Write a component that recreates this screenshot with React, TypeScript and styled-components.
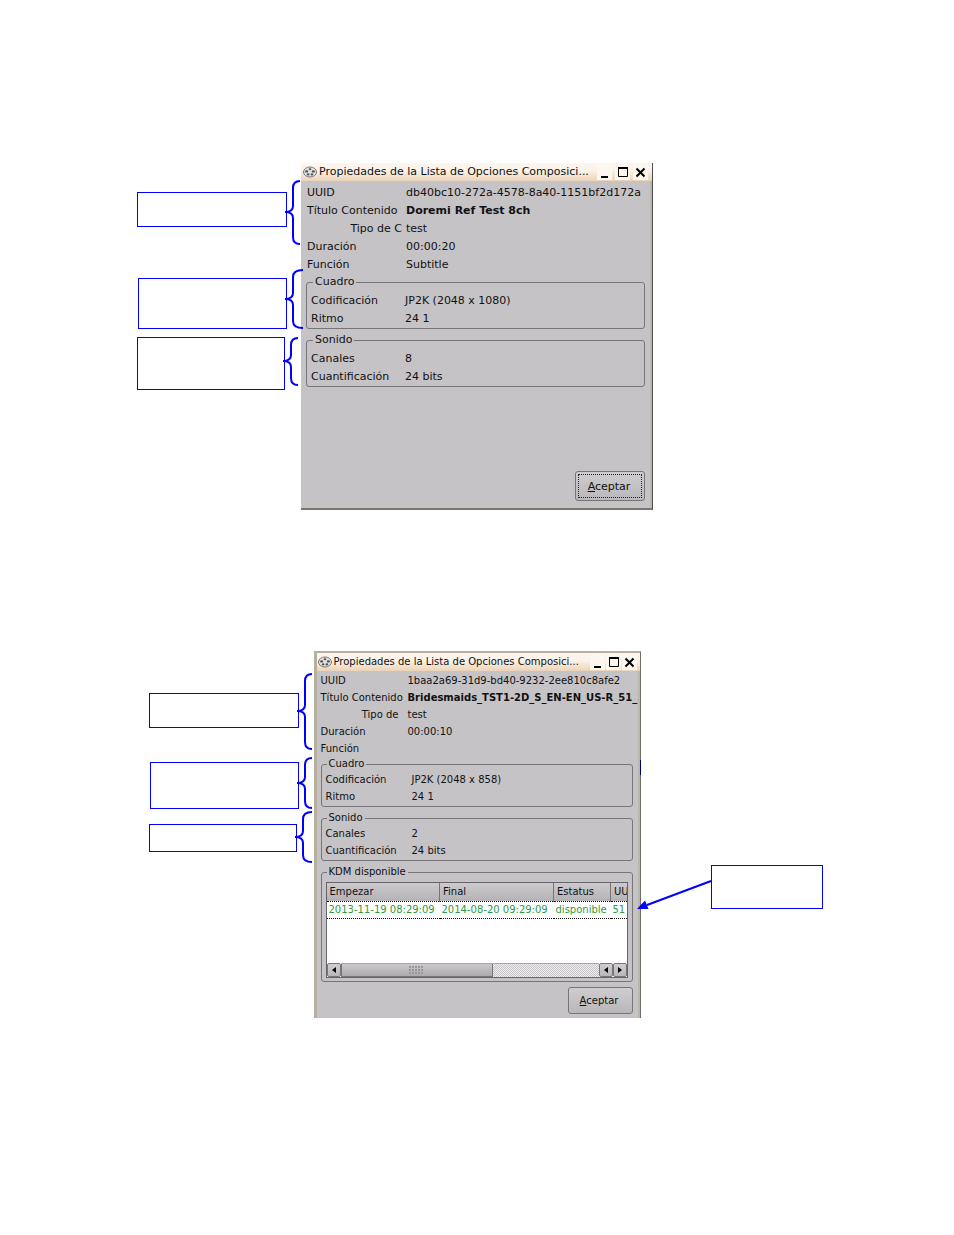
import React from "react";
import styled, { createGlobalStyle, css } from "styled-components";

const BLUE = "#0000ff";
const PANEL = "#c6c3c6";

const GlobalStyle = createGlobalStyle`
  * { box-sizing: border-box; }
  body { margin: 0; background: #fff; color: #111; font-family: "DejaVu Sans", sans-serif; }
`;

const Page = styled.main`
  display: flex;
  flex-direction: column;
  gap: 141px;
  padding: 163px 0 217px;
`;

const Figure = styled.section<{ $dialog: number }>`
  display: grid;
  grid-template-columns: 1fr ${(p) => p.$dialog}px 1fr;
`;

const Notes = styled.div<{ $top: number }>`
  position: relative;
  z-index: 1;
  display: flex;
  flex-direction: column;
  align-items: flex-end;
  padding-top: ${(p) => p.$top}px;
`;

const RightNotes = styled.div`
  position: relative;
  z-index: 1;
  display: flex;
  align-items: flex-start;
  padding-top: 214px;
`;

const Note = styled.div<{ $gap?: number; $end: number }>`
  display: flex;
  align-items: flex-start;
  margin-top: ${(p) => p.$gap ?? 0}px;
  margin-right: ${(p) => p.$end}px;
`;

const NoteBox = styled.div<{ $w: number; $h: number; $drop?: number }>`
  width: ${(p) => p.$w}px;
  height: ${(p) => p.$h}px;
  margin-top: ${(p) => p.$drop ?? 0}px;
  border: 1px solid ${BLUE};
  background: #fff;
`;

const BraceSvg = styled.svg`
  display: block;
  margin-left: -2px;
  overflow: visible;
`;

function Brace({ width = 15, height, tip }: { width?: number; height: number; tip: number }) {
  const mid = 8;
  const end = height - 1;
  return (
    <BraceSvg width={width} height={height} aria-hidden="true">
      <path
        d={`M${width} 1 Q${mid} 1 ${mid} 8 V${tip - 6} Q${mid} ${tip} 0 ${tip} Q${mid} ${tip} ${mid} ${tip + 6} V${end - 7} Q${mid} ${end} ${width} ${end}`}
        fill="none"
        stroke={BLUE}
        strokeWidth="2"
      />
    </BraceSvg>
  );
}

const Window = styled.article<{ $small?: boolean }>`
  position: relative;
  display: flex;
  flex-direction: column;
  min-width: 0;
  background: ${PANEL};
  font-size: 11px;
  border-right: 1px solid #4c4c4c;
  border-bottom: 2px solid #77766f;
  box-shadow: inset -2px 0 #b9b7ae;
  ${(p) =>
    p.$small &&
    css`
      font-size: 10px;
      border: solid #b6b09f;
      border-width: 2px 1px 0 3px;
      border-right-color: #6f6e66;
      &::after {
        content: "";
        position: absolute;
        top: 107px;
        right: -1px;
        width: 1px;
        height: 15px;
        background: #000070;
      }
    `}
`;

const TitleBar = styled.header<{ $small?: boolean }>`
  display: flex;
  align-items: center;
  height: 18px;
  padding: 0 ${(p) => (p.$small ? 3 : 4)}px 0 ${(p) => (p.$small ? 1 : 2)}px;
  background: linear-gradient(#fdf6ee, #fbf3ea 40%, #ecd3b8);
`;

const Title = styled.h2`
  flex: 1;
  min-width: 0;
  margin: 0 0 0 2px;
  font-size: inherit;
  font-weight: 400;
  line-height: 18px;
  white-space: nowrap;
`;

const WinButtons = styled.div<{ $small?: boolean }>`
  display: flex;
  gap: ${(p) => (p.$small ? 1 : 3)}px;
`;

const WinButton = styled.button`
  display: block;
  width: 15px;
  height: 16px;
  padding: 0;
  border: 0;
  background: #fdf7ef;
  svg { display: block; }
`;

function WindowIcon() {
  return (
    <svg width="14" height="14" viewBox="0 0 14 14" aria-hidden="true">
      <ellipse cx="7" cy="7" rx="6.5" ry="5" fill="#e4e4e4" stroke="#777" />
      <ellipse cx="7" cy="4.2" rx="1.4" ry="1" fill="#555" />
      <ellipse cx="3.6" cy="6.4" rx="1.6" ry="1.2" fill="#555" />
      <ellipse cx="10.4" cy="6.4" rx="1.6" ry="1.2" fill="#555" />
      <ellipse cx="5.1" cy="9.4" rx="1.4" ry="1.1" fill="#555" />
      <ellipse cx="8.9" cy="9.4" rx="1.4" ry="1.1" fill="#555" />
    </svg>
  );
}

function WindowTitle({ small }: { small?: boolean }) {
  return (
    <TitleBar $small={small}>
      <WindowIcon />
      <Title>Propiedades de la Lista de Opciones Composici...</Title>
      <WinButtons $small={small}>
        <WinButton aria-label="Minimizar">
          <svg width="15" height="16"><path d="M4 13h7" stroke="#000" strokeWidth="2" /></svg>
        </WinButton>
        <WinButton aria-label="Maximizar">
          <svg width="15" height="16">
            <path d="M3.5 4v8.5h9V4" fill="none" stroke="#000" />
            <path d="M3 4h10" stroke="#000" strokeWidth="2" />
          </svg>
        </WinButton>
        <WinButton aria-label="Cerrar">
          <svg width="15" height="16"><path d="M3.5 4.500l8 8M11.5 4.500l-8 8" stroke="#000" strokeWidth="2" /></svg>
        </WinButton>
      </WinButtons>
    </TitleBar>
  );
}

const Body = styled.div<{ $small?: boolean }>`
  flex: 1;
  display: flex;
  flex-direction: column;
  padding: ${(p) => (p.$small ? "1px 7px 4px 4px" : "2px 7px 7px 5px")};
`;

const Fields = styled.dl<{ $label: number; $row: number; $line: number; $indent?: number }>`
  display: grid;
  grid-template-columns: ${(p) => p.$label}px 1fr;
  grid-auto-rows: ${(p) => p.$row}px;
  line-height: ${(p) => p.$line}px;
  margin: 0;
  padding-left: ${(p) => p.$indent ?? 0}px;
  white-space: nowrap;
`;

const Label = styled.dt<{ $right?: number }>`
  padding-right: ${(p) => p.$right ?? 0}px;
  text-align: ${(p) => (p.$right ? "right" : "left")};
`;

const Value = styled.dd<{ $bold?: boolean }>`
  min-width: 0;
  margin: 0;
  font-weight: ${(p) => (p.$bold ? 700 : 400)};
`;

const ClippedValue = styled(Value)`
  overflow: hidden;
  margin-right: -5px;
`;

const Group = styled.fieldset<{ $small?: boolean }>`
  min-width: 0;
  margin: 0 0 ${(p) => (p.$small ? 4 : 2)}px;
  padding: 0 4px 1px;
  border: 1px solid #77757a;
  border-radius: 3px;
`;

const Legend = styled.legend<{ $small?: boolean }>`
  margin-left: ${(p) => (p.$small ? 1 : 2)}px;
  padding: 0 2px;
  line-height: ${(p) => (p.$small ? 14 : 18)}px;
`;

const Footer = styled.footer<{ $space?: number }>`
  display: flex;
  justify-content: flex-end;
  padding-top: ${(p) => p.$space ?? 0}px;
`;

const Accept = styled.button<{ $small?: boolean }>`
  width: ${(p) => (p.$small ? 65 : 70)}px;
  height: ${(p) => (p.$small ? 27 : 30)}px;
  padding: 0 2px 0 0;
  font: inherit;
  color: inherit;
  background: linear-gradient(#cfcdcf, #b9b7b9);
  border: 1px solid #77757a;
  border-radius: 3px;
  ${(p) =>
    !p.$small &&
    css`
      outline: 1px dotted #222;
      outline-offset: -4px;
    `}
`;

const Scroller = styled.div`
  margin: 3px 0 2px;
  border: 1px solid #66646a;
  background: #fff;
`;

const TableArea = styled.div`
  height: 80px;
  overflow: hidden;
`;

const Table = styled.table`
  width: 100%;
  table-layout: fixed;
  border-collapse: collapse;
  white-space: nowrap;
`;

const Th = styled.th<{ $w?: number }>`
  width: ${(p) => (p.$w ? `${p.$w}px` : "auto")};
  height: 18px;
  padding: 0 0 0 3px;
  overflow: hidden;
  font-weight: 400;
  text-align: left;
  background: linear-gradient(#cccacc, #b4b2b4);
  border-right: 1px solid #77757a;
  &:last-child { border-right: 0; }
`;

const Td = styled.td`
  height: 17px;
  padding: 0 0 0 2px;
  overflow: hidden;
  color: #2c9c3c;
  border-top: 1px dotted #111;
  border-bottom: 1px dotted #111;
`;

const ScrollBar = styled.div`
  display: flex;
  height: 14px;
`;

const Arrow = styled.button`
  width: 14px;
  height: 14px;
  padding: 0;
  background: linear-gradient(#d0ced0, #b9b7b9);
  border: 1px solid #77757a;
  border-radius: 2px;
  svg { display: block; }
`;

const Track = styled.div`
  flex: 1;
  display: flex;
  background: repeating-conic-gradient(#c6c3c6 0 25%, #f0eff0 0 50%) 0 0 / 2px 2px;
  border-top: 1px solid #aaa8aa;
`;

const Thumb = styled.div`
  display: flex;
  align-items: center;
  justify-content: center;
  width: 59%;
  background: linear-gradient(#cac8ca, #adabad);
  border: 1px solid #77757a;
  border-top: 0;
`;

const Grip = styled.span`
  width: 15px;
  height: 9px;
  background: radial-gradient(circle at 1px 1px, #9a989a 1px, transparent 1px) 0 0 / 3px 3px;
`;

const Pointer = styled.svg`
  display: block;
  margin-left: -4px;
  overflow: visible;
`;

function ArrowIcon({ next }: { next?: boolean }) {
  return (
    <svg width="12" height="12" aria-hidden="true">
      <path d={next ? "M4 3v6l4-3z" : "M8 3v6L4 6z"} fill="#000" />
    </svg>
  );
}

export default function App() {
  return (
    <>
      <GlobalStyle />
      <Page>
        <Figure $dialog={352}>
          <Notes $top={17}>
            <Note $end={1}>
              <NoteBox $w={150} $h={35} $drop={12} />
              <Brace height={65} tip={32} />
            </Note>
            <Note $gap={24} $end={-2}>
              <NoteBox $w={149} $h={51} $drop={9} />
              <Brace width={18} height={60} tip={30} />
            </Note>
            <Note $gap={8} $end={3}>
              <NoteBox $w={148} $h={53} />
              <Brace height={49} tip={24} />
            </Note>
          </Notes>
          <Window>
            <WindowTitle />
            <Body>
              <Fields $label={99} $row={18} $line={20} $indent={1}>
                <Label>UUID</Label>
                <Value>db40bc10-272a-4578-8a40-1151bf2d172a</Value>
                <Label>Título Contenido</Label>
                <Value $bold>Doremi Ref Test 8ch</Value>
                <Label $right={4}>Tipo de C</Label>
                <Value>test</Value>
                <Label>Duración</Label>
                <Value>00:00:20</Value>
                <Label>Función</Label>
                <Value>Subtitle</Value>
              </Fields>
              <Group>
                <Legend>Cuadro</Legend>
                <Fields $label={94} $row={18} $line={20}>
                  <Label>Codificación</Label>
                  <Value>JP2K (2048 x 1080)</Value>
                  <Label>Ritmo</Label>
                  <Value>24 1</Value>
                </Fields>
              </Group>
              <Group>
                <Legend>Sonido</Legend>
                <Fields $label={94} $row={18} $line={20}>
                  <Label>Canales</Label>
                  <Value>8</Value>
                  <Label>Cuantificación</Label>
                  <Value>24 bits</Value>
                </Fields>
              </Group>
              <Footer $space={82}>
                <Accept><u>A</u>ceptar</Accept>
              </Footer>
            </Body>
          </Window>
        </Figure>

        <Figure $dialog={327}>
          <Notes $top={22}>
            <Note $end={2}>
              <NoteBox $w={150} $h={35} $drop={20} />
              <Brace height={77} tip={38} />
            </Note>
            <Note $gap={7} $end={2}>
              <NoteBox $w={149} $h={47} $drop={5} />
              <Brace height={52} tip={26} />
            </Note>
            <Note $gap={2} $end={2}>
              <NoteBox $w={148} $h={28} $drop={13} />
              <Brace width={17} height={52} tip={26} />
            </Note>
          </Notes>
          <Window $small>
            <WindowTitle small />
            <Body $small>
              <Fields $label={87} $row={17} $line={17}>
                <Label>UUID</Label>
                <Value>1baa2a69-31d9-bd40-9232-2ee810c8afe2</Value>
                <Label>Título Contenido</Label>
                <ClippedValue $bold>Bridesmaids_TST1-2D_S_EN-EN_US-R_51_2</ClippedValue>
                <Label $right={9}>Tipo de</Label>
                <Value>test</Value>
                <Label>Duración</Label>
                <Value>00:00:10</Value>
                <Label>Función</Label>
                <Value />
              </Fields>
              <Group $small>
                <Legend $small>Cuadro</Legend>
                <Fields $label={86} $row={17} $line={17}>
                  <Label>Codificación</Label>
                  <Value>JP2K (2048 x 858)</Value>
                  <Label>Ritmo</Label>
                  <Value>24 1</Value>
                </Fields>
              </Group>
              <Group $small>
                <Legend $small>Sonido</Legend>
                <Fields $label={86} $row={17} $line={17}>
                  <Label>Canales</Label>
                  <Value>2</Value>
                  <Label>Cuantificación</Label>
                  <Value>24 bits</Value>
                </Fields>
              </Group>
              <Group $small>
                <Legend $small>KDM disponible</Legend>
                <Scroller>
                  <TableArea>
                    <Table>
                      <thead>
                        <tr>
                          <Th $w={113}>Empezar</Th>
                          <Th $w={114}>Final</Th>
                          <Th $w={57}>Estatus</Th>
                          <Th>UU</Th>
                        </tr>
                      </thead>
                      <tbody>
                        <tr>
                          <Td>2013-11-19 08:29:09</Td>
                          <Td>2014-08-20 09:29:09</Td>
                          <Td>disponible</Td>
                          <Td>51</Td>
                        </tr>
                      </tbody>
                    </Table>
                  </TableArea>
                  <ScrollBar>
                    <Arrow aria-label="Anterior"><ArrowIcon /></Arrow>
                    <Track><Thumb><Grip /></Thumb></Track>
                    <Arrow aria-label="Anterior"><ArrowIcon /></Arrow>
                    <Arrow aria-label="Siguiente"><ArrowIcon next /></Arrow>
                  </ScrollBar>
                </Scroller>
              </Group>
              <Footer $space={1}>
                <Accept $small><u>A</u>ceptar</Accept>
              </Footer>
            </Body>
          </Window>
          <RightNotes>
            <Pointer width="74" height="50" aria-hidden="true">
              <path d="M74 16L10 40" stroke={BLUE} strokeWidth="2" />
              <path d="M0 44L8 35.500L11.500 44z" fill={BLUE} />
            </Pointer>
            <NoteBox $w={112} $h={44} />
          </RightNotes>
        </Figure>
      </Page>
    </>
  );
}
